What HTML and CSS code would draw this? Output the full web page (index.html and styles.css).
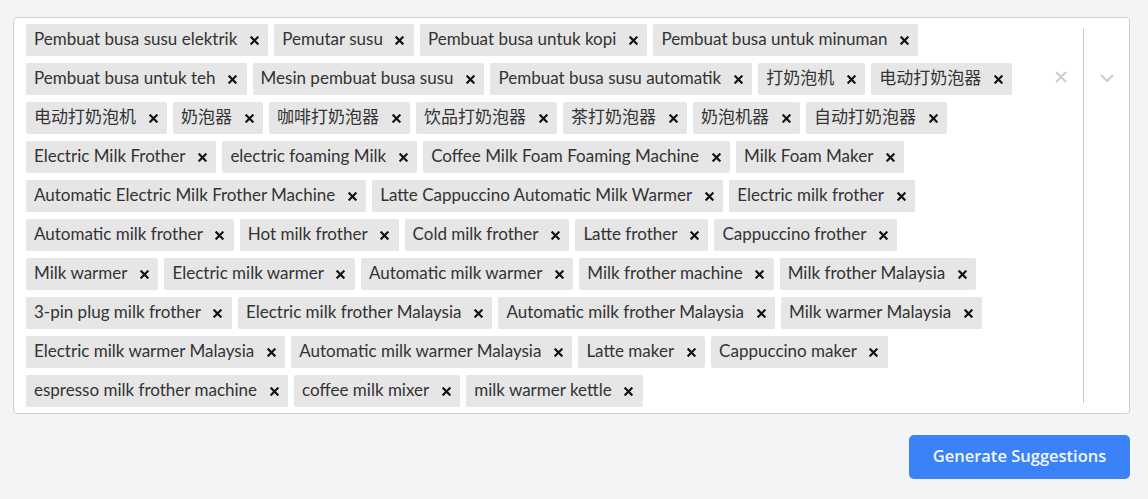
FILE: index.html
```html
<!DOCTYPE html>
<html lang="en">
<head>
<meta charset="utf-8">
<title>Keyword suggestions</title>
<link rel="stylesheet" href="styles.css">
</head>
<body>
<main class="page">
  <div class="select">
    <div class="values">
      <span class="tag"><span class="tag-label">Pembuat busa susu elektrik</span><span class="tag-remove"><svg viewBox="0 0 10 10"><path d="M1.5 1.5l7 7M8.5 1.5l-7 7"/></svg></span></span>
      <span class="tag"><span class="tag-label">Pemutar susu</span><span class="tag-remove"><svg viewBox="0 0 10 10"><path d="M1.5 1.5l7 7M8.5 1.5l-7 7"/></svg></span></span>
      <span class="tag"><span class="tag-label">Pembuat busa untuk kopi</span><span class="tag-remove"><svg viewBox="0 0 10 10"><path d="M1.5 1.5l7 7M8.5 1.5l-7 7"/></svg></span></span>
      <span class="tag"><span class="tag-label">Pembuat busa untuk minuman</span><span class="tag-remove"><svg viewBox="0 0 10 10"><path d="M1.5 1.5l7 7M8.5 1.5l-7 7"/></svg></span></span>
      <span class="tag"><span class="tag-label">Pembuat busa untuk teh</span><span class="tag-remove"><svg viewBox="0 0 10 10"><path d="M1.5 1.5l7 7M8.5 1.5l-7 7"/></svg></span></span>
      <span class="tag"><span class="tag-label">Mesin pembuat busa susu</span><span class="tag-remove"><svg viewBox="0 0 10 10"><path d="M1.5 1.5l7 7M8.5 1.5l-7 7"/></svg></span></span>
      <span class="tag"><span class="tag-label">Pembuat busa susu automatik</span><span class="tag-remove"><svg viewBox="0 0 10 10"><path d="M1.5 1.5l7 7M8.5 1.5l-7 7"/></svg></span></span>
      <span class="tag"><span class="tag-label">打奶泡机</span><span class="tag-remove"><svg viewBox="0 0 10 10"><path d="M1.5 1.5l7 7M8.5 1.5l-7 7"/></svg></span></span>
      <span class="tag"><span class="tag-label">电动打奶泡器</span><span class="tag-remove"><svg viewBox="0 0 10 10"><path d="M1.5 1.5l7 7M8.5 1.5l-7 7"/></svg></span></span>
      <span class="tag"><span class="tag-label">电动打奶泡机</span><span class="tag-remove"><svg viewBox="0 0 10 10"><path d="M1.5 1.5l7 7M8.5 1.5l-7 7"/></svg></span></span>
      <span class="tag"><span class="tag-label">奶泡器</span><span class="tag-remove"><svg viewBox="0 0 10 10"><path d="M1.5 1.5l7 7M8.5 1.5l-7 7"/></svg></span></span>
      <span class="tag"><span class="tag-label">咖啡打奶泡器</span><span class="tag-remove"><svg viewBox="0 0 10 10"><path d="M1.5 1.5l7 7M8.5 1.5l-7 7"/></svg></span></span>
      <span class="tag"><span class="tag-label">饮品打奶泡器</span><span class="tag-remove"><svg viewBox="0 0 10 10"><path d="M1.5 1.5l7 7M8.5 1.5l-7 7"/></svg></span></span>
      <span class="tag"><span class="tag-label">茶打奶泡器</span><span class="tag-remove"><svg viewBox="0 0 10 10"><path d="M1.5 1.5l7 7M8.5 1.5l-7 7"/></svg></span></span>
      <span class="tag"><span class="tag-label">奶泡机器</span><span class="tag-remove"><svg viewBox="0 0 10 10"><path d="M1.5 1.5l7 7M8.5 1.5l-7 7"/></svg></span></span>
      <span class="tag"><span class="tag-label">自动打奶泡器</span><span class="tag-remove"><svg viewBox="0 0 10 10"><path d="M1.5 1.5l7 7M8.5 1.5l-7 7"/></svg></span></span>
      <span class="tag"><span class="tag-label">Electric Milk Frother</span><span class="tag-remove"><svg viewBox="0 0 10 10"><path d="M1.5 1.5l7 7M8.5 1.5l-7 7"/></svg></span></span>
      <span class="tag"><span class="tag-label">electric foaming Milk</span><span class="tag-remove"><svg viewBox="0 0 10 10"><path d="M1.5 1.5l7 7M8.5 1.5l-7 7"/></svg></span></span>
      <span class="tag"><span class="tag-label">Coffee Milk Foam Foaming Machine</span><span class="tag-remove"><svg viewBox="0 0 10 10"><path d="M1.5 1.5l7 7M8.5 1.5l-7 7"/></svg></span></span>
      <span class="tag"><span class="tag-label">Milk Foam Maker</span><span class="tag-remove"><svg viewBox="0 0 10 10"><path d="M1.5 1.5l7 7M8.5 1.5l-7 7"/></svg></span></span>
      <span class="tag"><span class="tag-label">Automatic Electric Milk Frother Machine</span><span class="tag-remove"><svg viewBox="0 0 10 10"><path d="M1.5 1.5l7 7M8.5 1.5l-7 7"/></svg></span></span>
      <span class="tag"><span class="tag-label">Latte Cappuccino Automatic Milk Warmer</span><span class="tag-remove"><svg viewBox="0 0 10 10"><path d="M1.5 1.5l7 7M8.5 1.5l-7 7"/></svg></span></span>
      <span class="tag"><span class="tag-label">Electric milk frother</span><span class="tag-remove"><svg viewBox="0 0 10 10"><path d="M1.5 1.5l7 7M8.5 1.5l-7 7"/></svg></span></span>
      <span class="tag"><span class="tag-label">Automatic milk frother</span><span class="tag-remove"><svg viewBox="0 0 10 10"><path d="M1.5 1.5l7 7M8.5 1.5l-7 7"/></svg></span></span>
      <span class="tag"><span class="tag-label">Hot milk frother</span><span class="tag-remove"><svg viewBox="0 0 10 10"><path d="M1.5 1.5l7 7M8.5 1.5l-7 7"/></svg></span></span>
      <span class="tag"><span class="tag-label">Cold milk frother</span><span class="tag-remove"><svg viewBox="0 0 10 10"><path d="M1.5 1.5l7 7M8.5 1.5l-7 7"/></svg></span></span>
      <span class="tag"><span class="tag-label">Latte frother</span><span class="tag-remove"><svg viewBox="0 0 10 10"><path d="M1.5 1.5l7 7M8.5 1.5l-7 7"/></svg></span></span>
      <span class="tag"><span class="tag-label">Cappuccino frother</span><span class="tag-remove"><svg viewBox="0 0 10 10"><path d="M1.5 1.5l7 7M8.5 1.5l-7 7"/></svg></span></span>
      <span class="tag"><span class="tag-label">Milk warmer</span><span class="tag-remove"><svg viewBox="0 0 10 10"><path d="M1.5 1.5l7 7M8.5 1.5l-7 7"/></svg></span></span>
      <span class="tag"><span class="tag-label">Electric milk warmer</span><span class="tag-remove"><svg viewBox="0 0 10 10"><path d="M1.5 1.5l7 7M8.5 1.5l-7 7"/></svg></span></span>
      <span class="tag"><span class="tag-label">Automatic milk warmer</span><span class="tag-remove"><svg viewBox="0 0 10 10"><path d="M1.5 1.5l7 7M8.5 1.5l-7 7"/></svg></span></span>
      <span class="tag"><span class="tag-label">Milk frother machine</span><span class="tag-remove"><svg viewBox="0 0 10 10"><path d="M1.5 1.5l7 7M8.5 1.5l-7 7"/></svg></span></span>
      <span class="tag"><span class="tag-label">Milk frother Malaysia</span><span class="tag-remove"><svg viewBox="0 0 10 10"><path d="M1.5 1.5l7 7M8.5 1.5l-7 7"/></svg></span></span>
      <span class="tag"><span class="tag-label">3-pin plug milk frother</span><span class="tag-remove"><svg viewBox="0 0 10 10"><path d="M1.5 1.5l7 7M8.5 1.5l-7 7"/></svg></span></span>
      <span class="tag"><span class="tag-label">Electric milk frother Malaysia</span><span class="tag-remove"><svg viewBox="0 0 10 10"><path d="M1.5 1.5l7 7M8.5 1.5l-7 7"/></svg></span></span>
      <span class="tag"><span class="tag-label">Automatic milk frother Malaysia</span><span class="tag-remove"><svg viewBox="0 0 10 10"><path d="M1.5 1.5l7 7M8.5 1.5l-7 7"/></svg></span></span>
      <span class="tag"><span class="tag-label">Milk warmer Malaysia</span><span class="tag-remove"><svg viewBox="0 0 10 10"><path d="M1.5 1.5l7 7M8.5 1.5l-7 7"/></svg></span></span>
      <span class="tag"><span class="tag-label">Electric milk warmer Malaysia</span><span class="tag-remove"><svg viewBox="0 0 10 10"><path d="M1.5 1.5l7 7M8.5 1.5l-7 7"/></svg></span></span>
      <span class="tag"><span class="tag-label">Automatic milk warmer Malaysia</span><span class="tag-remove"><svg viewBox="0 0 10 10"><path d="M1.5 1.5l7 7M8.5 1.5l-7 7"/></svg></span></span>
      <span class="tag"><span class="tag-label">Latte maker</span><span class="tag-remove"><svg viewBox="0 0 10 10"><path d="M1.5 1.5l7 7M8.5 1.5l-7 7"/></svg></span></span>
      <span class="tag"><span class="tag-label">Cappuccino maker</span><span class="tag-remove"><svg viewBox="0 0 10 10"><path d="M1.5 1.5l7 7M8.5 1.5l-7 7"/></svg></span></span>
      <span class="tag"><span class="tag-label">espresso milk frother machine</span><span class="tag-remove"><svg viewBox="0 0 10 10"><path d="M1.5 1.5l7 7M8.5 1.5l-7 7"/></svg></span></span>
      <span class="tag"><span class="tag-label">coffee milk mixer</span><span class="tag-remove"><svg viewBox="0 0 10 10"><path d="M1.5 1.5l7 7M8.5 1.5l-7 7"/></svg></span></span>
      <span class="tag"><span class="tag-label">milk warmer kettle</span><span class="tag-remove"><svg viewBox="0 0 10 10"><path d="M1.5 1.5l7 7M8.5 1.5l-7 7"/></svg></span></span>
    </div>
    <div class="indicators">
      <span class="clear"><svg viewBox="0 0 14 14"><path d="M2 2l10 10M12 2L2 12"/></svg></span>
      <span class="separator"></span>
      <span class="dropdown"><svg viewBox="0 0 16 10"><path d="M2 2l6 6 6-6"/></svg></span>
    </div>
  </div>
  <div class="actions">
    <button class="generate" type="button">Generate Suggestions</button>
  </div>
</main>
</body>
</html>
```

FILE: styles.css
```css
* { box-sizing: border-box; }

body {
  margin: 0;
  background: #f3f4f6;
  font-family: Lato, "Noto Sans CJK SC", sans-serif;
  color: #333333;
}

.page {
  padding: 17px 18px 0 13px;
}

.select {
  display: flex;
  background: #ffffff;
  border: 1px solid #cfcfcf;
  border-radius: 4px;
}

.values {
  flex: 1;
  display: flex;
  flex-wrap: wrap;
  align-content: flex-start;
  gap: 7px 6px;
  padding: 6px 12px 6px 12px;
}

.tag {
  display: flex;
  align-items: center;
  height: 32px;
  background: #e6e6e6;
  border-radius: 2px;
  font-size: 17px;
  line-height: 1;
  white-space: nowrap;
}

.tag-label {
  padding: 0 6px 3px 8px;
  color: #333333;
}

.tag-remove {
  display: flex;
  align-items: center;
  justify-content: center;
  width: 25px;
  height: 100%;
  padding-right: 3px;
}

.tag-remove svg {
  width: 9px;
  height: 9px;
  fill: none;
  stroke: #111111;
  stroke-width: 2.4;
  stroke-linecap: square;
}

.indicators {
  display: flex;
  align-items: flex-start;
  width: 90px;
  padding: 10px 0;
}

.clear {
  display: flex;
  justify-content: center;
  width: 44px;
  padding-top: 42px;
}

.clear svg {
  width: 14px;
  height: 14px;
  fill: none;
  stroke: #cccccc;
  stroke-width: 2;
}

.separator {
  align-self: stretch;
  width: 1px;
  background: #cccccc;
}

.dropdown {
  display: flex;
  justify-content: center;
  flex: 1;
  padding-top: 45px;
}

.dropdown svg {
  width: 16px;
  height: 10px;
  fill: none;
  stroke: #cccccc;
  stroke-width: 2;
}

.actions {
  display: flex;
  justify-content: flex-end;
  padding-top: 21px;
}

.generate {
  width: 221px;
  height: 44px;
  padding: 0 0 3px;
  border: 0;
  border-radius: 5px;
  background: #3b82f6;
  color: #f4f8ff;
  font-family: "Open Sans", sans-serif;
  font-weight: 600;
  font-size: 16.5px;
  cursor: pointer;
}
```
